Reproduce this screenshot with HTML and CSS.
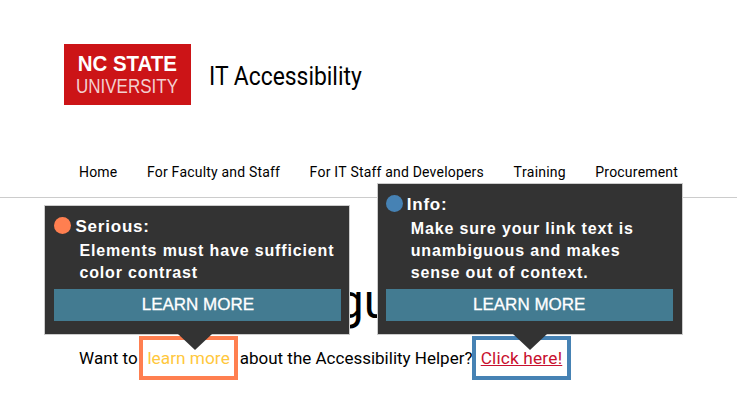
FILE: index.html
```html
<!DOCTYPE html>
<html lang="en">
<head>
<meta charset="utf-8">
<title>IT Accessibility</title>
<link rel="stylesheet" href="styles.css">
</head>
<body>
<header class="masthead">
  <a class="logo" href="#"><span class="logo-top">NC STATE</span><span class="logo-bottom">UNIVERSITY</span></a>
  <span class="site-name">IT Accessibility</span>
</header>
<nav class="nav">
  <a href="#">Home</a>
  <a href="#">For Faculty and Staff</a>
  <a href="#">For IT Staff and Developers</a>
  <a href="#">Training</a>
  <a href="#">Procurement</a>
</nav>
<main class="content">
  <h1 class="heading">Testing Language</h1>
  <p class="intro">Want to <span class="mark mark-serious"><a class="low-contrast" href="#">learn more</a><span class="tip tip-serious"><span class="tip-title"><span class="dot dot-serious"></span>Serious:</span><span class="tip-body">Elements must have sufficient color contrast</span><span class="tip-button">LEARN MORE</span></span></span> about the Accessibility Helper? <span class="mark mark-info"><a class="red-link" href="#">Click here!</a><span class="tip tip-info"><span class="tip-title"><span class="dot dot-info"></span>Info:</span><span class="tip-body">Make sure your link text is unambiguous and makes sense out of context.</span><span class="tip-button">LEARN MORE</span></span></span></p>
</main>
</body>
</html>
```
FILE: styles.css
```css
* { box-sizing: border-box; }
html, body { margin: 0; padding: 0; }
body {
  width: 737px;
  height: 414px;
  overflow: hidden;
  background: #fff;
  color: #000;
  font-family: Roboto, "Liberation Sans", sans-serif;
}
a { color: inherit; text-decoration: none; }

.masthead {
  display: flex;
  align-items: center;
  gap: 18px;
  padding: 44px 0 0 64px;
  height: 105px;
}
.logo {
  display: flex;
  flex-direction: column;
  align-items: center;
  width: 127px;
  height: 61px;
  padding-top: 9px;
  background: #cc1417;
  color: #fff;
  font-family: "Liberation Sans", sans-serif;
}
.logo-top {
  font-size: 22px;
  font-weight: 700;
  line-height: 22px;
  white-space: nowrap;
  transform: scaleX(.93);
}
.logo-bottom {
  font-size: 20px;
  line-height: 22px;
  color: #f3cfcf;
  white-space: nowrap;
  transform: scaleX(.85);
}
.site-name {
  font-size: 25px;
  line-height: 28px;
  margin-top: 5px;
  white-space: nowrap;
  transform: scaleX(.915);
  transform-origin: left center;
}

.nav {
  display: flex;
  gap: 29.5px;
  padding: 59px 0 16px 79px;
  height: 93px;
  border-bottom: 1px solid #ccc;
  font-size: 14px;
  line-height: 17px;
  font-kerning: none;
  letter-spacing: .18px;
}

.content { padding-left: 79px; }
.heading {
  margin: 76px 0 0;
  padding-left: 10px;
  font-size: 48px;
  line-height: 56px;
  font-weight: 400;
  white-space: nowrap;
}
.intro {
  margin: 6px 0 0;
  font-size: 17px;
  line-height: 44px;
  white-space: nowrap;
  font-kerning: none;
}

.mark {
  position: relative;
  display: inline-block;
  height: 44px;
  line-height: 36px;
  padding: 0 4px;
  border: 4px solid;
  vertical-align: top;
  font-size: 17.3px;
}
.mark-serious { border-color: #ff7f50; margin: 0 -2.4px 0 -2.6px; min-width: 97px; }
.mark-info { border-color: #4682b4; margin-left: -5px; padding: 0 5px; min-width: 98px; }
.low-contrast { color: #ffc83d; }
.red-link { color: #c8102e; text-decoration: underline; letter-spacing: .15px; }

.tip {
  position: absolute;
  bottom: calc(100% + 5px);
  display: block;
  width: 306px;
  padding: 11px 8px 13px 9px;
  background: #333;
  border: 1px solid #ccc;
  color: #fff;
  font-family: "Liberation Sans", sans-serif;
  white-space: normal;
  font-kerning: auto;
  letter-spacing: 0;
}
.tip::after {
  content: "";
  position: absolute;
  top: 100%;
  border-left: 17px solid transparent;
  border-right: 17px solid transparent;
  border-top: 16px solid #333;
}
.tip-serious { left: -99px; }
.tip-serious::after { left: 133px; }
.tip-info { left: -99px; padding: 11px 9px 13px 8px; }
.tip-info::after { left: 135px; }

.tip-title {
  display: flex;
  align-items: center;
  gap: 4px;
  height: 20px;
  font-size: 17px;
  line-height: 20px;
  font-weight: 700;
  letter-spacing: .8px;
}
.dot {
  display: block;
  width: 17px;
  height: 17px;
  border-radius: 50%;
  margin-top: -3px;
}
.dot-serious { background: #ff7f50; }
.dot-info { background: #4682b4; }
.tip-body {
  display: block;
  margin: 3px 0 5px;
  padding-left: 25px;
  font-size: 16px;
  line-height: 22px;
  font-weight: 700;
  letter-spacing: .85px;
}
.tip-button {
  display: block;
  height: 32px;
  background: #437b91;
  font-size: 17px;
  line-height: 32px;
  font-weight: 400;
  text-align: center;
  -webkit-text-stroke: .3px #fff;
}
```
